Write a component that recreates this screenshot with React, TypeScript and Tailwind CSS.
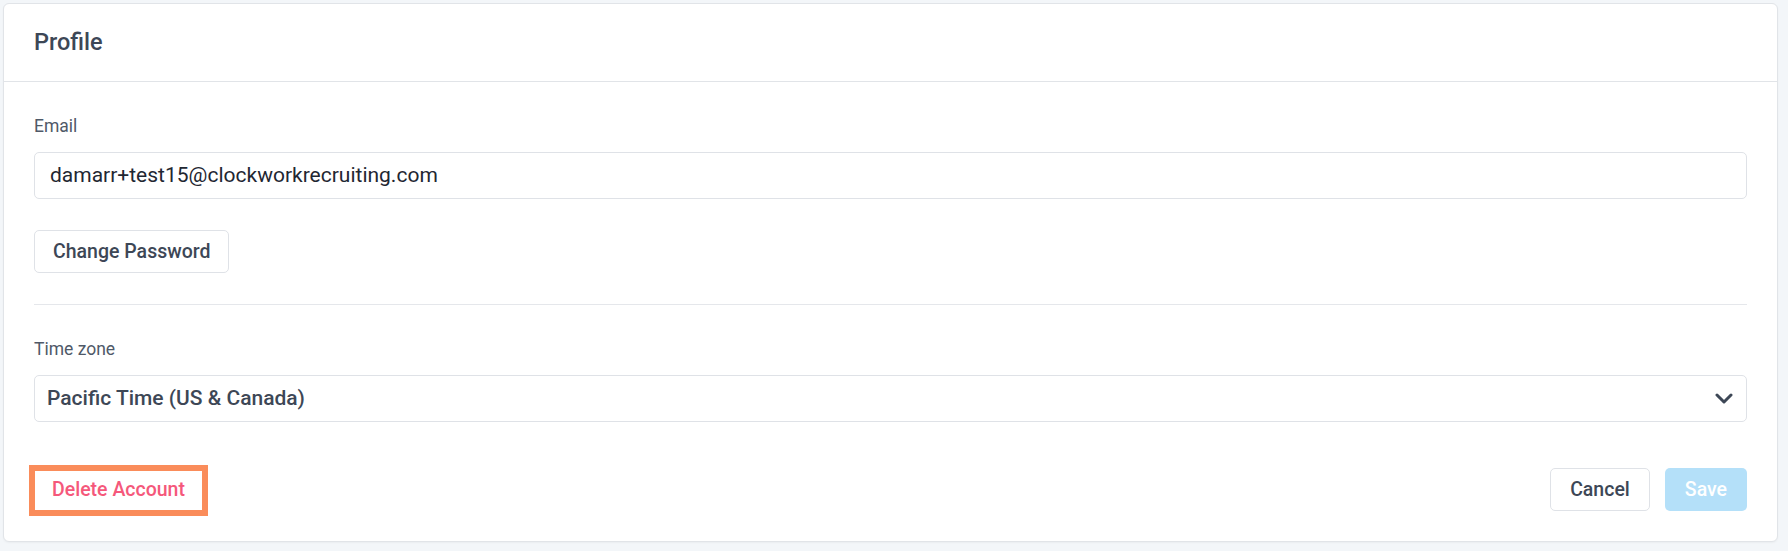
import React from 'react';

// Profile settings card
const font = { fontFamily: 'Roboto, "Liberation Sans", sans-serif' };

const ChevronDown = () => (
  <svg width="18" height="11" viewBox="0 0 18 11" fill="none" className="shrink-0">
    <path d="M2 2l7 7 7-7" stroke="#3d4756" strokeWidth="3" strokeLinecap="round" strokeLinejoin="round" />
  </svg>
);

export default function App() {
  return (
    <div className="min-h-screen bg-[#f3f6f9] pt-[3px] pl-[3px] pr-[10px] pb-[10px]" style={font}>
      <div className="rounded-[6px] border border-[#e1e4e8] bg-white shadow-[0_1px_2px_rgba(0,0,0,0.04)]">
        {/* Header */}
        <div className="h-[78px] border-b border-[#e1e4e8] px-[30px] flex items-center">
          <h2 className="text-[23.5px] font-medium text-[#3d4756] leading-none">Profile</h2>
        </div>

        {/* Body */}
        <div className="px-[30px] pt-[32px] pb-[30px]">
          <label className="block text-[17.5px] leading-6 text-[#4f5968] mb-[14px]">Email</label>
          <div className="h-[47px] rounded-[5px] border border-[#dfe2e7] flex items-center pl-[15px] text-[21px] text-[#1f2732]">
            damarr+test15@clockworkrecruiting.com
          </div>

          <button className="mt-[31px] h-[43px] px-[18px] rounded-[5px] border border-[#dfe2e7] bg-white text-[19.5px] font-medium text-[#3d4756]">
            Change Password
          </button>

          <div className="mt-[31px] h-px bg-[#e5e7eb]" />

          <label className="block mt-[32px] text-[17.5px] leading-6 text-[#4f5968] mb-[14px]">Time zone</label>
          <div className="h-[47px] rounded-[5px] border border-[#dfe2e7] flex items-center justify-between pl-[12px] pr-[13px]">
            <span className="text-[21px] font-medium text-[#3d4756]">Pacific Time (US &amp; Canada)</span>
            <ChevronDown />
          </div>

          {/* Footer */}
          <div className="mt-[46px] flex items-center justify-between">
            <div className="relative">
              <button className="h-[43px] px-[18px] rounded-[5px] bg-white text-[19.5px] font-medium text-[#f5587b]">
                Delete Account
              </button>
              <span className="pointer-events-none absolute -left-[5px] -right-[5px] -top-[3px] -bottom-[5px] border-[6px] border-[#fa8c5a]" />
            </div>
            <div className="flex items-center gap-[15px]">
              <button className="h-[43px] px-[19px] rounded-[5px] border border-[#dfe2e7] bg-white text-[19.5px] font-medium text-[#3d4756]">
                Cancel
              </button>
              <button className="h-[43px] px-[20px] rounded-[5px] bg-[#b4e0f9] text-[19.5px] font-medium text-white">
                Save
              </button>
            </div>
          </div>
        </div>
      </div>
    </div>
  );
}
